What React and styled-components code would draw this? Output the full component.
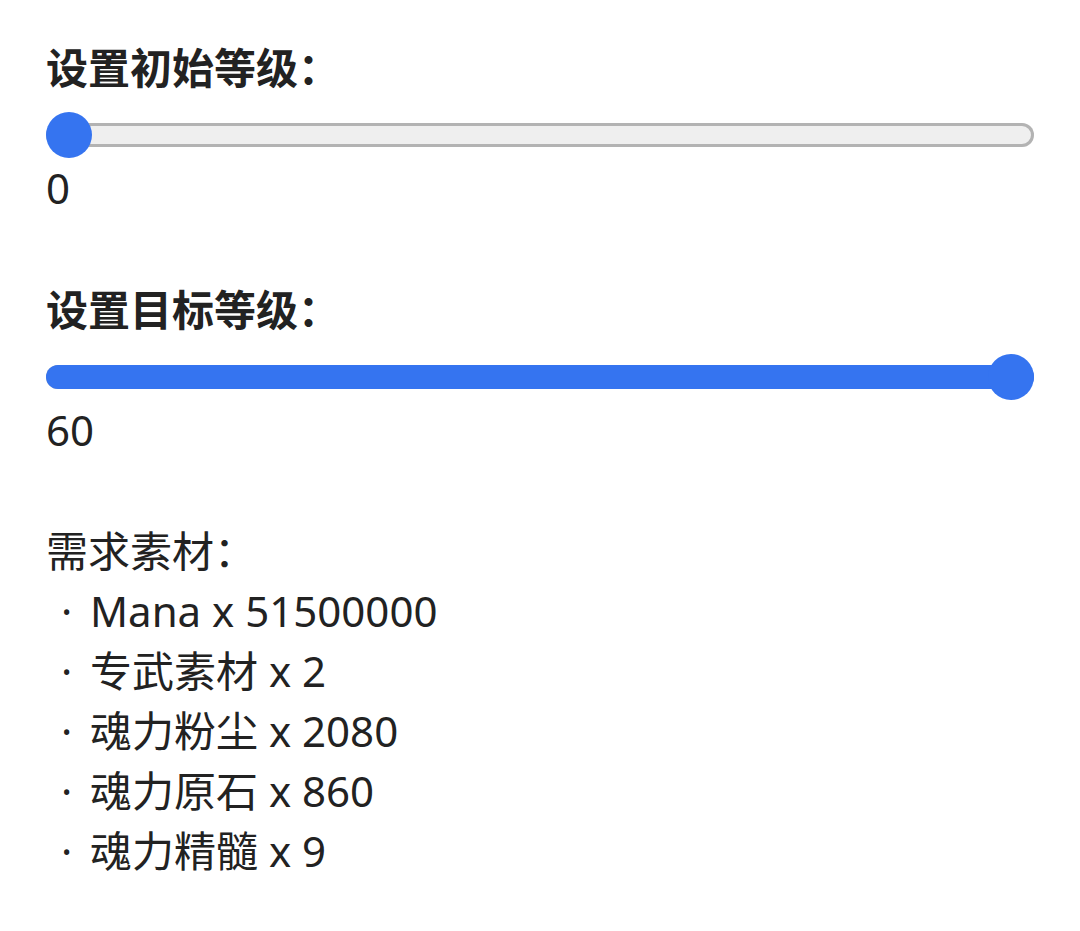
import React from "react";
import styled, { createGlobalStyle } from "styled-components";

const Global = createGlobalStyle`
  html, body { margin: 0; padding: 0; background: #ffffff; }
  body { font-family: "Noto Sans", "Noto Sans CJK SC", sans-serif; color: #222222; }
`;

const Page = styled.div`
  padding: 38px 46px 40px 46px;
  display: flex;
  flex-direction: column;
`;

const Section = styled.section`
  display: flex;
  flex-direction: column;
  margin-bottom: ${(p) => p.$gap || 0}px;
`;

const Heading = styled.h2`
  margin: 0;
  font-size: 42px;
  line-height: 60px;
  font-weight: 700;
  color: #222222;
`;

const SliderWrap = styled.div`
  position: relative;
  height: 46px;
  margin-top: 14px;
  width: 988px;
  display: flex;
  align-items: center;
`;

const Track = styled.div`
  position: relative;
  width: 100%;
  height: 24px;
  border-radius: 12px;
  background: #efefef;
  box-shadow: inset 0 0 0 3px #b3b3b3;
`;

const Fill = styled.div`
  position: absolute;
  left: 0;
  top: 0;
  bottom: 0;
  background: #3574f0;
  border-radius: 12px;
`;

const Thumb = styled.div`
  position: absolute;
  top: 0;
  width: 46px;
  height: 46px;
  border-radius: 50%;
  background: #3574f0;
`;

const Value = styled.div`
  font-size: 42px;
  line-height: 60px;
`;

const Text = styled.div`
  font-size: 42px;
  line-height: 60px;
`;

const Item = styled.div`
  font-size: 42px;
  line-height: 60px;
  display: flex;
  padding-left: 15px;
`;

const Bullet = styled.span`
  width: 29px;
`;

function Slider({ value, max }) {
  const pct = value / max;
  return (
    <SliderWrap>
      <Track>
        {pct > 0 && <Fill style={{ width: `${pct * 100}%` }} />}
      </Track>
      <Thumb style={{ left: `${pct * (988 - 46)}px` }} />
    </SliderWrap>
  );
}

const items = [
  "Mana x 51500000",
  "专武素材 x 2",
  "魂力粉尘 x 2080",
  "魂力原石 x 860",
  "魂力精髓 x 9",
];

export default function App() {
  return (
    <Page>
      <Global />
      <Section $gap={62}>
        <Heading>设置初始等级：</Heading>
        <Slider value={0} max={60} />
        <Value>0</Value>
      </Section>
      <Section $gap={61}>
        <Heading>设置目标等级：</Heading>
        <Slider value={60} max={60} />
        <Value>60</Value>
      </Section>
      <Section>
        <Text>需求素材：</Text>
        {items.map((t) => (
          <Item key={t}>
            <Bullet>·</Bullet>
            <span>{t}</span>
          </Item>
        ))}
      </Section>
    </Page>
  );
}
